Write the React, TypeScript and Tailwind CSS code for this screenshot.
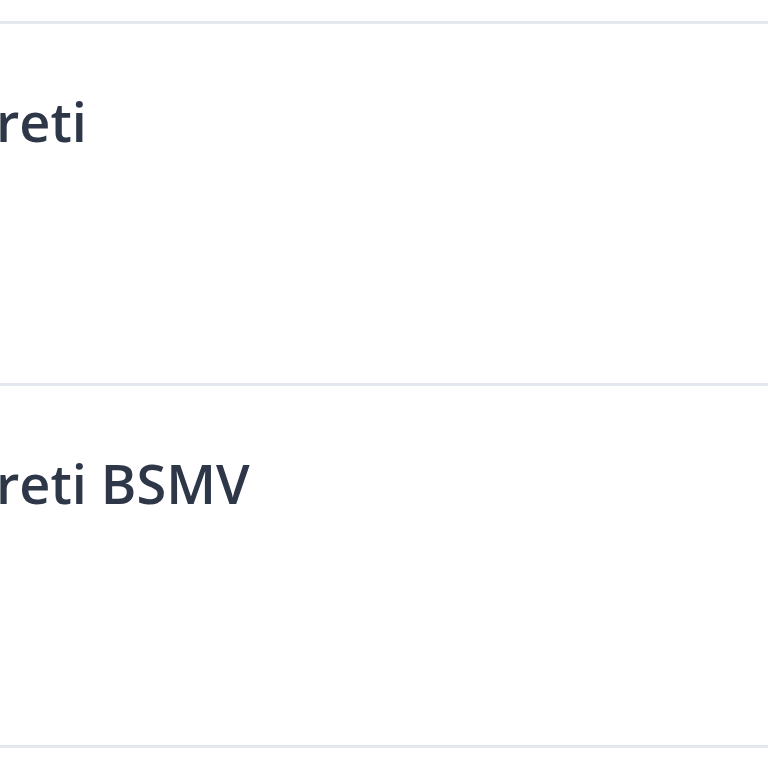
export default function App() {
  const rows = ["reti", "reti BSMV"];
  return (
    <div className="w-[768px] h-[768px] bg-white overflow-hidden pt-[21px]">
      <div className="border-t-[3px] border-[#e3e8ee]">
        {rows.map((t) => (
          <div key={t} className="h-[362px] border-b-[3px] border-[#e3e8ee] pt-[67px]">
            <div
              className="ml-[-4px] text-[54px] leading-[60px] font-semibold text-[#2d3748] whitespace-nowrap"
              style={{ fontFamily: '"Open Sans", sans-serif' }}
            >
              {t}
            </div>
          </div>
        ))}
      </div>
    </div>
  );
}
